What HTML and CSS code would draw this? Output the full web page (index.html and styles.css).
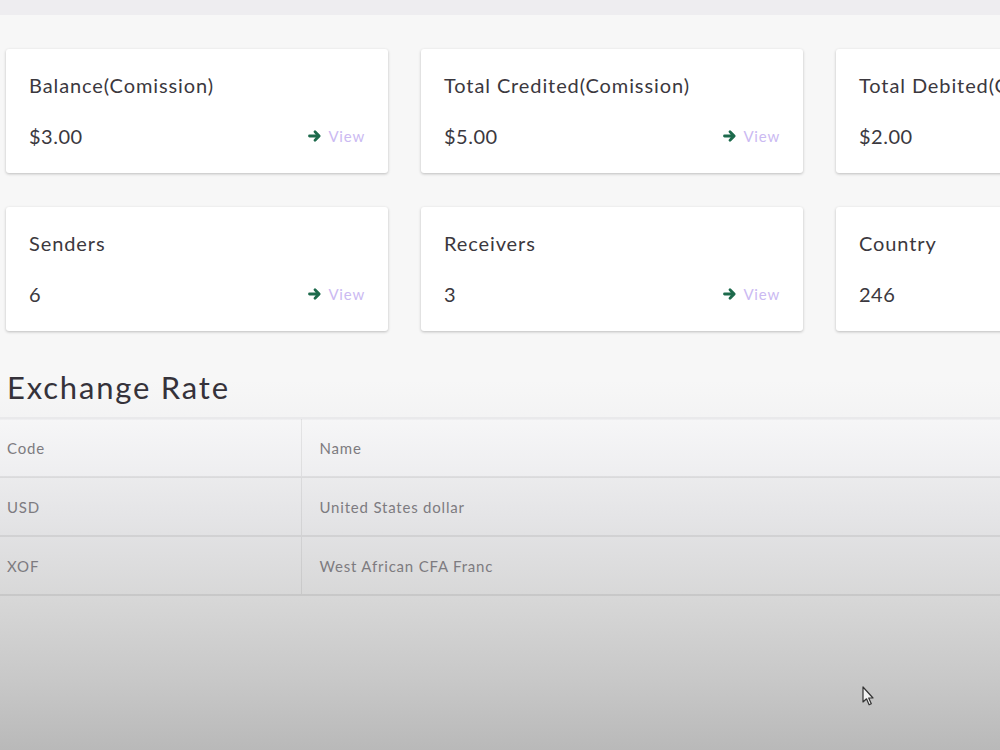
FILE: index.html
```html
<!DOCTYPE html>
<html>
<head>
<meta charset="utf-8">
<link rel="stylesheet" href="styles.css">
</head>
<body>
<div class="topbar"></div>
<main class="content">
  <section class="cards">
    <div class="card">
      <div class="card-title">Balance(Comission)</div>
      <div class="card-row"><span class="card-value">$3.00</span><a class="view"><svg class="arrow" viewBox="0 0 14 14"><path d="M1.5 7h9M7 2.8L11.2 7 7 11.2"/></svg>View</a></div>
    </div>
    <div class="card">
      <div class="card-title">Total Credited(Comission)</div>
      <div class="card-row"><span class="card-value">$5.00</span><a class="view"><svg class="arrow" viewBox="0 0 14 14"><path d="M1.5 7h9M7 2.8L11.2 7 7 11.2"/></svg>View</a></div>
    </div>
    <div class="card">
      <div class="card-title">Total Debited(Comission)</div>
      <div class="card-row"><span class="card-value">$2.00</span><a class="view"><svg class="arrow" viewBox="0 0 14 14"><path d="M1.5 7h9M7 2.8L11.2 7 7 11.2"/></svg>View</a></div>
    </div>
    <div class="card">
      <div class="card-title">Senders</div>
      <div class="card-row"><span class="card-value">6</span><a class="view"><svg class="arrow" viewBox="0 0 14 14"><path d="M1.5 7h9M7 2.8L11.2 7 7 11.2"/></svg>View</a></div>
    </div>
    <div class="card">
      <div class="card-title">Receivers</div>
      <div class="card-row"><span class="card-value">3</span><a class="view"><svg class="arrow" viewBox="0 0 14 14"><path d="M1.5 7h9M7 2.8L11.2 7 7 11.2"/></svg>View</a></div>
    </div>
    <div class="card">
      <div class="card-title">Country</div>
      <div class="card-row"><span class="card-value">246</span><a class="view"><svg class="arrow" viewBox="0 0 14 14"><path d="M1.5 7h9M7 2.8L11.2 7 7 11.2"/></svg>View</a></div>
    </div>
  </section>
  <h2 class="section-title">Exchange Rate</h2>
  <table class="rates">
    <thead>
      <tr><th class="col-code">Code</th><th class="col-name">Name</th></tr>
    </thead>
    <tbody>
      <tr><td class="col-code">USD</td><td class="col-name">United States dollar</td></tr>
      <tr><td class="col-code">XOF</td><td class="col-name">West African CFA Franc</td></tr>
    </tbody>
  </table>
</main>
<svg class="cursor" viewBox="0 0 14 22" width="14" height="22"><path d="M1 1v15l3.5-3.2 2.6 6 2.2-1-2.6-5.8H11z" fill="#f2f2f2" stroke="#333" stroke-width="1.2" stroke-linejoin="round"/></svg>
</body>
</html>
```
FILE: styles.css
```css
* { box-sizing: border-box; }
html, body { margin: 0; height: 100%; }
body {
  width: 1000px;
  height: 750px;
  overflow: hidden;
  position: relative;
  font-family: Lato, "Noto Sans", sans-serif;
  color: #3b383e;
  background: linear-gradient(to bottom, #f7f7f7 0px, #f7f7f7 380px, #f1f1f2 440px, #e4e4e6 520px, #d7d7d7 600px, #c8c8c8 680px, #b9b9b9 750px);
}
.topbar {
  height: 15px;
  background: #eeedf0;
}
.content {
  padding-top: 34px;
}
.cards {
  display: grid;
  grid-template-columns: 382px 382px 382px;
  column-gap: 33px;
  row-gap: 34px;
  padding-left: 6px;
}
.card {
  background: #fff;
  height: 124px;
  border-radius: 3px;
  box-shadow: 0 1px 3px rgba(0,0,0,0.24);
  padding: 22px 23px 0 23px;
  display: flex;
  flex-direction: column;
  overflow: hidden;
}
.card-title {
  font-size: 20px;
  letter-spacing: 0.9px;
  line-height: 28px;
  height: 28px;
  white-space: nowrap;
}
.card-row {
  margin-top: 23px;
  display: flex;
  align-items: center;
  justify-content: space-between;
  height: 28px;
}
.card-value {
  font-size: 20px;
  letter-spacing: 0.5px;
}
.view {
  display: flex;
  align-items: center;
  gap: 6px;
  font-size: 15px;
  letter-spacing: 0.8px;
  color: #cbbaf2;
}
.arrow {
  width: 14px;
  height: 14px;
  fill: none;
  stroke: #1d6a4c;
  stroke-width: 2.8;
  stroke-linecap: round;
  stroke-linejoin: round;
}
.section-title {
  margin: 36px 0 0 7px;
  font-size: 31px;
  letter-spacing: 1.8px;
  font-weight: 400;
  line-height: 40px;
  color: #35323a;
}
.rates {
  margin-top: 10px;
  width: 1000px;
  border-collapse: collapse;
  font-size: 15px;
  letter-spacing: 0.8px;
  color: #7d7b80;
}
.rates th, .rates td {
  height: 59px;
  text-align: left;
  font-weight: 400;
  border-bottom: 2px solid rgba(0,0,0,0.07);
}
.rates thead tr {
  background: linear-gradient(to bottom, #f6f6f7, #eeeef0);
  border-top: 2px solid #e9e9eb;
}
.col-code {
  width: 301px;
  padding-left: 7px;
  border-right: 1px solid rgba(0,0,0,0.07);
}
.col-name {
  padding-left: 18px;
}
.cursor {
  position: absolute;
  left: 862px;
  top: 686px;
}
```
